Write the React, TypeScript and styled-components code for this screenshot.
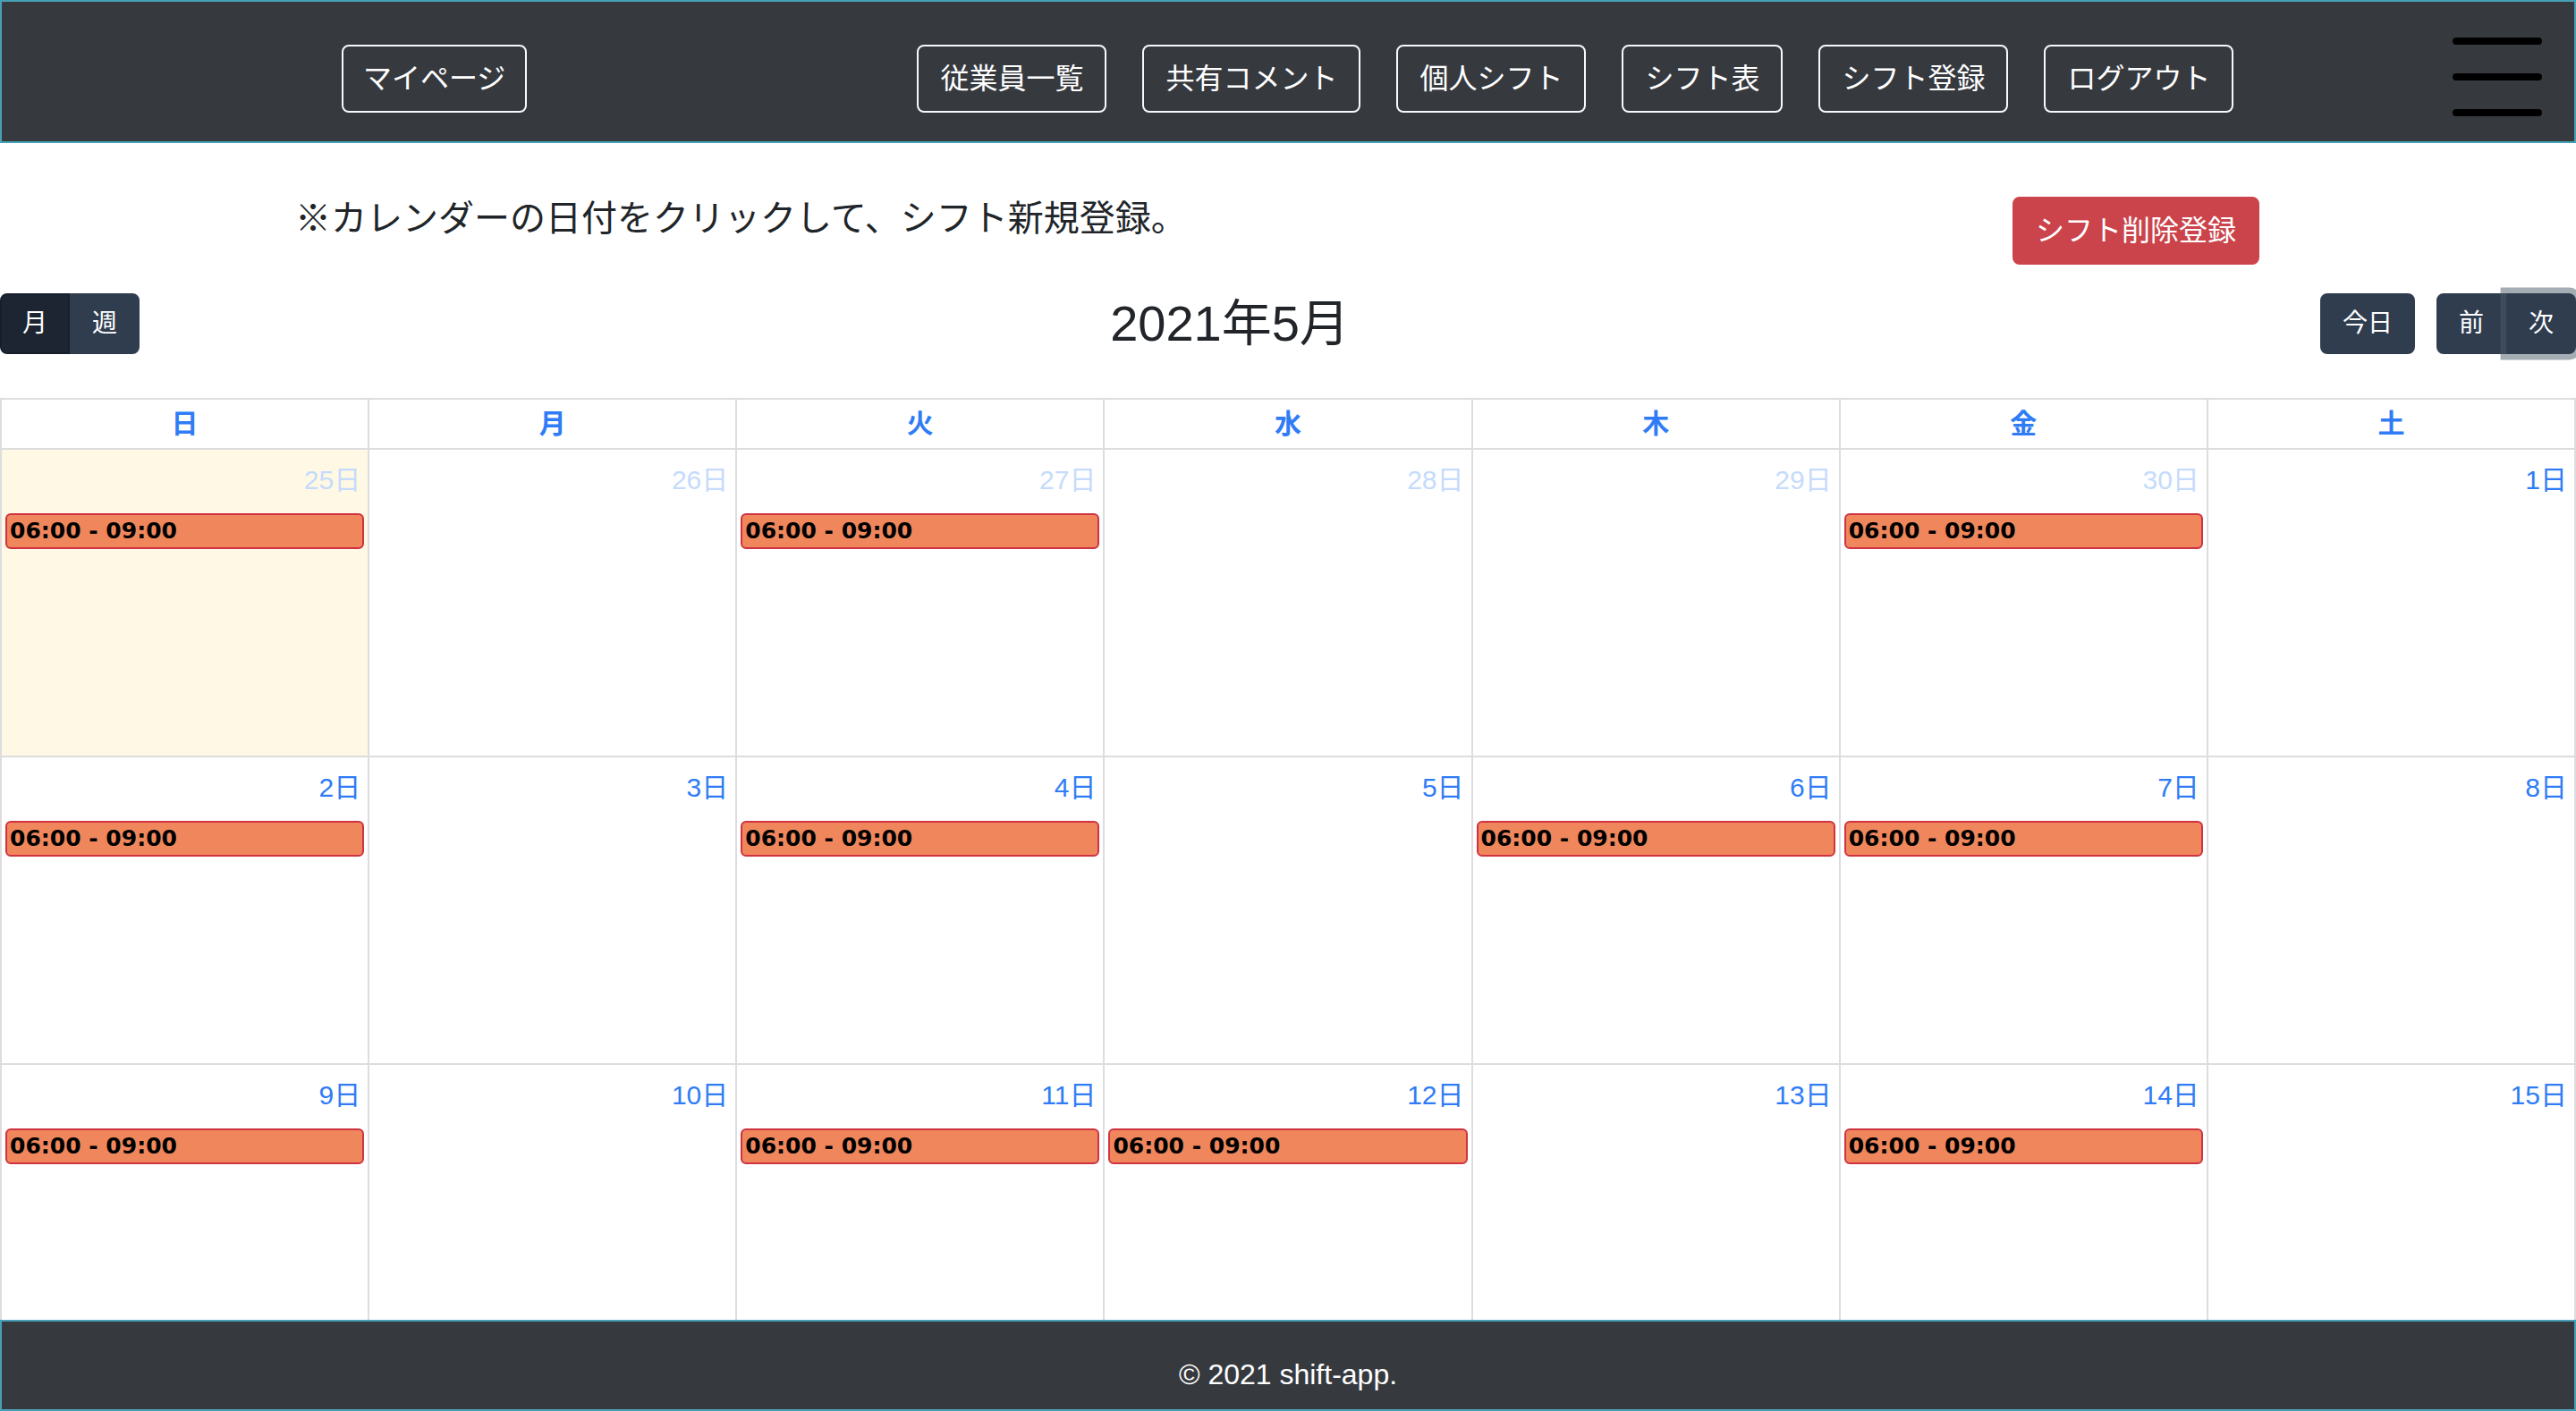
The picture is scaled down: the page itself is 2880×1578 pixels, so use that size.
import styled, { createGlobalStyle } from "styled-components";

const GlobalStyle = createGlobalStyle`
  * {
    box-sizing: border-box;
  }
  html,
  body {
    margin: 0;
    padding: 0;
  }
  body {
    font-family: "Liberation Sans", "Noto Sans CJK JP", sans-serif;
    color: #212529;
    background: #fff;
    overflow: hidden;
  }
`;

const Page = styled.div`
  height: 100vh;
  display: flex;
  flex-direction: column;
`;

const NavBar = styled.header`
  flex: none;
  height: 160px;
  background: #363a3f;
  border: 2px solid #47a1b6;
  display: flex;
  align-items: flex-start;
  padding: 48px 36px 0 380px;
`;

const NavButton = styled.button`
  height: 76px;
  padding: 0 24px;
  background: transparent;
  border: 2px solid #f8f9fa;
  border-radius: 8px;
  color: #fff;
  font-family: inherit;
  font-size: 32px;
  line-height: 72px;
  white-space: nowrap;
`;

const MyPageButton = styled(NavButton)`
  padding: 0 22px;
`;

const NavGroup = styled.nav`
  display: flex;
  gap: 40px;
  margin-left: 436px;
`;

const Hamburger = styled.div`
  margin-left: auto;
  margin-top: -8px;
  width: 100px;
  display: flex;
  flex-direction: column;
  gap: 32px;
`;

const Bar = styled.span`
  display: block;
  height: 8px;
  border-radius: 4px;
  background: #000;
`;

const Main = styled.main`
  flex: 1;
  min-height: 0;
  overflow: hidden;
`;

const NoticeRow = styled.div`
  display: flex;
  justify-content: space-between;
  align-items: flex-start;
  padding: 60px 354px 0 330px;
`;

const Notice = styled.p`
  margin: 0;
  font-size: 40px;
  line-height: 48px;
`;

const DangerButton = styled.button`
  height: 76px;
  padding: 0 24px;
  background: #cb444b;
  border: 2px solid #cb444b;
  border-radius: 8px;
  color: #fff;
  font-family: inherit;
  font-size: 32px;
  line-height: 72px;
  white-space: nowrap;
`;

const Toolbar = styled.div`
  display: flex;
  justify-content: space-between;
  align-items: center;
  margin: 32px 0 49px;
`;

const Title = styled.h2`
  margin: 0;
  font-size: 56px;
  font-weight: 400;
  line-height: 68px;
`;

const ToolbarSide = styled.div`
  display: flex;
  gap: 24px;
`;

const ButtonGroup = styled.div`
  display: flex;

  & > button {
    border-radius: 0;
  }
  & > button:first-child {
    border-top-left-radius: 8px;
    border-bottom-left-radius: 8px;
  }
  & > button:last-child {
    border-top-right-radius: 8px;
    border-bottom-right-radius: 8px;
  }
`;

const FcButton = styled.button<{ $active?: boolean; $focused?: boolean }>`
  height: 68px;
  padding: 0 23px;
  border: 2px solid ${(p) => (p.$active ? "#161f29" : "#303d4f")};
  border-radius: 8px;
  background: ${(p) => (p.$active ? "#1c2531" : "#303d4f")};
  color: #fff;
  font-family: inherit;
  font-size: 28px;
  line-height: 64px;
  white-space: nowrap;
  position: relative;
  z-index: ${(p) => (p.$focused ? 1 : 0)};
  box-shadow: ${(p) =>
    p.$focused ? "0 0 0 6.4px rgba(76, 91, 106, 0.5)" : "none"};
`;

const Grid = styled.div`
  display: grid;
  grid-template-columns: repeat(7, 1fr);
  border-top: 2px solid #ddd;
  border-left: 2px solid #ddd;
`;

const HeadCell = styled.div`
  height: 56px;
  border-right: 2px solid #ddd;
  border-bottom: 2px solid #ddd;
  color: #2f7cf6;
  font-weight: 700;
  font-size: 30px;
  line-height: 54px;
  text-align: center;
`;

const DayCell = styled.div<{ $today?: boolean }>`
  height: 344px;
  border-right: 2px solid #ddd;
  border-bottom: 2px solid #ddd;
  background: ${(p) => (p.$today ? "#fff8e4" : "#fff")};
  padding-top: 11px;
`;

const DayNumber = styled.div<{ $other?: boolean }>`
  padding: 0 8px;
  text-align: right;
  font-size: 30px;
  line-height: 45px;
  color: ${(p) => (p.$other ? "#c5dbfc" : "#2f7cf6")};
`;

const EventChip = styled.div`
  margin: 15px 4px 0;
  height: 40px;
  padding: 0 3px;
  border: 2px solid #cf3240;
  border-radius: 6px;
  background: #ef865c;
  color: #000;
  font-family: "DejaVu Sans", sans-serif;
  font-weight: 700;
  font-size: 25px;
  line-height: 36px;
  white-space: nowrap;
  overflow: hidden;
`;

const Footer = styled.footer`
  flex: none;
  height: 102px;
  background: #363a3f;
  border: 2px solid #47a1b6;
  color: #fff;
  font-size: 32px;
  display: flex;
  align-items: center;
  justify-content: center;
  padding-top: 20px;
`;

const navItems = ["従業員一覧", "共有コメント", "個人シフト", "シフト表", "シフト登録", "ログアウト"];
const weekdays = ["日", "月", "火", "水", "木", "金", "土"];
const shiftDays = new Set([
  "4-25", "4-27", "4-30",
  "5-2", "5-4", "5-6", "5-7",
  "5-9", "5-11", "5-12", "5-14",
]);

type Day = { month: number; date: number };

// only the weeks that are visible above the footer
function buildDays(weeks: number): Day[] {
  const days: Day[] = [];
  const start = new Date(2021, 3, 25);
  for (let i = 0; i < weeks * 7; i++) {
    const d = new Date(start.getFullYear(), start.getMonth(), start.getDate() + i);
    days.push({ month: d.getMonth() + 1, date: d.getDate() });
  }
  return days;
}

export default function App() {
  const days = buildDays(3);
  return (
    <Page>
      <GlobalStyle />
      <NavBar>
        <MyPageButton>マイページ</MyPageButton>
        <NavGroup>
          {navItems.map((item) => (
            <NavButton key={item}>{item}</NavButton>
          ))}
        </NavGroup>
        <Hamburger>
          <Bar />
          <Bar />
          <Bar />
        </Hamburger>
      </NavBar>

      <Main>
        <NoticeRow>
          <Notice>※カレンダーの日付をクリックして、シフト新規登録。</Notice>
          <DangerButton>シフト削除登録</DangerButton>
        </NoticeRow>

        <Toolbar>
          <ButtonGroup>
            <FcButton $active>月</FcButton>
            <FcButton>週</FcButton>
          </ButtonGroup>
          <Title>2021年5月</Title>
          <ToolbarSide>
            <FcButton>今日</FcButton>
            <ButtonGroup>
              <FcButton>前</FcButton>
              <FcButton $focused>次</FcButton>
            </ButtonGroup>
          </ToolbarSide>
        </Toolbar>

        <Grid>
          {weekdays.map((w) => (
            <HeadCell key={w}>{w}</HeadCell>
          ))}
          {days.map((d) => {
            const key = `${d.month}-${d.date}`;
            return (
              <DayCell key={key} $today={key === "4-25"}>
                <DayNumber $other={d.month !== 5}>{d.date}日</DayNumber>
                {shiftDays.has(key) && <EventChip>06:00 - 09:00</EventChip>}
              </DayCell>
            );
          })}
        </Grid>
      </Main>

      <Footer>© 2021 shift-app.</Footer>
    </Page>
  );
}
